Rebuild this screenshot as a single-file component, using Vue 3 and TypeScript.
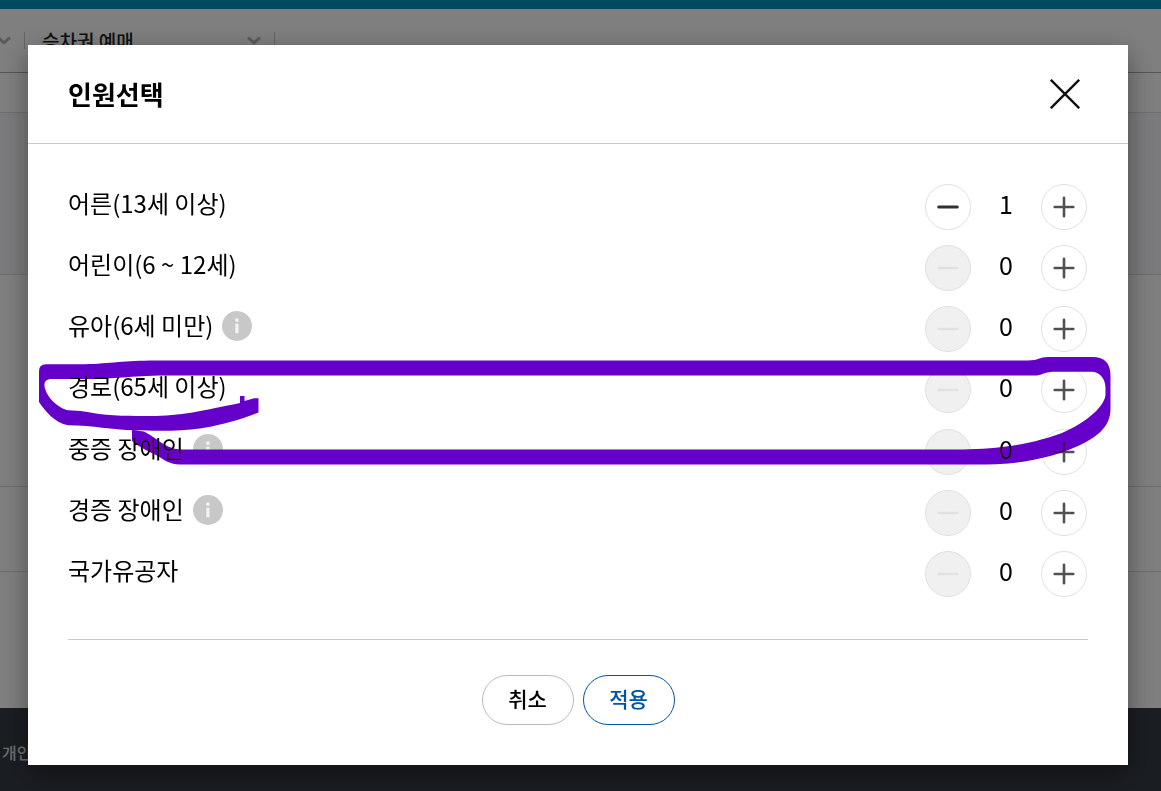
<script setup lang="ts">
import { ref } from 'vue'

interface Passenger {
  id: string
  label: string
  info: boolean
  count: number
}

const passengers = ref<Passenger[]>([
  { id: 'adult', label: '어른(13세 이상)', info: false, count: 1 },
  { id: 'child', label: '어린이(6 ~ 12세)', info: false, count: 0 },
  { id: 'infant', label: '유아(6세 미만)', info: true, count: 0 },
  { id: 'senior', label: '경로(65세 이상)', info: false, count: 0 },
  { id: 'severe', label: '중증 장애인', info: true, count: 0 },
  { id: 'mild', label: '경증 장애인', info: true, count: 0 },
  { id: 'merit', label: '국가유공자', info: false, count: 0 },
])

function change(p: Passenger, step: number) {
  p.count = Math.max(0, p.count + step)
}
</script>

<template>
  <div class="page">
    <div class="topbar"></div>
    <nav class="crumbs">
      <div class="crumb first">
        <svg class="chevron" viewBox="0 0 14 9" aria-hidden="true"><path d="M1 1.5 7 6.8 13 1.5" /></svg>
      </div>
      <div class="crumb">
        <span>승차권 예매</span>
        <svg class="chevron" viewBox="0 0 14 9" aria-hidden="true"><path d="M1 1.5 7 6.8 13 1.5" /></svg>
      </div>
    </nav>
    <div class="band tabs"></div>
    <div class="band hero"></div>
    <div class="band content"></div>
    <div class="band strip"></div>
    <div class="band rest"></div>
    <footer class="footer"><a href="#">개인</a></footer>
  </div>

  <div class="overlay">
    <section class="modal" role="dialog" aria-modal="true" aria-labelledby="dialog-title">
      <header class="head">
        <h1 id="dialog-title">인원선택</h1>
        <button type="button" class="close" aria-label="닫기">
          <svg viewBox="0 0 30 30" aria-hidden="true"><path d="M.8.8 29.2 29.2M29.2.8.8 29.2" /></svg>
        </button>
      </header>

      <div class="body">
        <ul class="list">
          <li v-for="p in passengers" :key="p.id" class="row">
            <div class="name">
              <span :id="p.id">{{ p.label }}</span>
              <button v-if="p.info" type="button" class="info" aria-label="안내">
                <svg viewBox="0 0 30 30" aria-hidden="true">
                  <circle cx="15" cy="15" r="15" fill="#c8c8c8" />
                  <path d="M13.3 7.500h3.200v3.200h-3.200zM13.3 12.700h3.200v9.600h-3.200z" fill="#f4f4f4" />
                </svg>
              </button>
            </div>
            <div class="stepper" role="group" :aria-labelledby="p.id">
              <button type="button" class="step" aria-label="감소" :disabled="p.count === 0" @click="change(p, -1)">
                <svg viewBox="0 0 22 22" aria-hidden="true"><path class="minus" d="M1.700 11h18.600" /></svg>
              </button>
              <output class="count">{{ p.count }}</output>
              <button type="button" class="step" aria-label="증가" @click="change(p, 1)">
                <svg viewBox="0 0 22 22" aria-hidden="true"><path class="plus" d="M1.700 11h18.600M11 1.700v18.600" /></svg>
              </button>
            </div>
          </li>
        </ul>
        <div class="actions">
          <button type="button" class="pill">취소</button>
          <button type="button" class="pill primary">적용</button>
        </div>
      </div>

      <svg class="marker" viewBox="28 45 1100 720" preserveAspectRatio="none" aria-hidden="true">
        <path
          d="M39 402V371Q39 364.500 46 364.300L85 364.300C110 363.500 125 360.500 155 360.500H1028C1038 360.500 1040 357 1048 357H1093C1104 357 1110.500 363 1110.500 375V409C1110.500 428 1095 438 1078 446C1050 459 1015 464.500 985 464.500H180C170 464.500 164 460 158 456C148 451 139 447 132 441V430L144 431.500C157 438 166 449.500 182 449.500H955C1000 449.500 1032 444 1062 433C1088 422 1105.500 405 1105.500 394V388C1105.500 378 1099 371.700 1092 371.700H1053C1044 372 1042 375.500 1034 375.500H165C130 376 112 379 92 379H50C46 379.500 44 382 44.500 386C46 397 58 408 68 410.300C74 411 80 410.500 84 411.500C105 415.500 122 416 145 416C180 416.500 200 411 240 403V396H244.500V401L254 398.300H258.500V412.500C240 420 220 425 200 428.500C180 431.500 155 431 135 430.300C110 430 95 425.500 68 425.300C55 423 45 411 39 402Z"
        />
      </svg>
    </section>
  </div>
</template>

<style>
body {
  margin: 0;
  background: #fff;
}
</style>

<style scoped>
* {
  box-sizing: border-box;
}

.page,
.overlay,
button {
  font-family: "Noto Sans CJK KR", "Noto Sans", sans-serif;
}

.page {
  display: flex;
  flex-direction: column;
  height: 100vh;
  overflow: hidden;
}

.topbar {
  flex: none;
  height: 9px;
  background: #0093c1;
}

.crumbs {
  display: flex;
  flex: none;
  height: 64px;
  padding-top: 23px;
  border-bottom: 1px solid #aaa;
}

.crumb {
  display: flex;
  justify-content: space-between;
  width: 250px;
  height: 17px;
  padding: 0 13px 0 17px;
  border-right: 1px solid #ccc;
  font-size: 19px;
  line-height: 17px;
  font-weight: 500;
  color: #222;
}

.crumb.first {
  justify-content: flex-end;
  width: 25px;
  padding: 0 13px 0 0;
}

.chevron {
  flex: none;
  width: 14px;
  height: 9px;
  margin-top: 4px;
  fill: none;
  stroke: #b4b4b8;
  stroke-width: 3;
}

.band {
  flex: none;
  border-bottom: 1px solid #ddd;
}

.tabs {
  height: 40px;
}

.hero {
  height: 162px;
  background: #f7f7fa;
}

.content {
  height: 212px;
}

.strip {
  height: 85px;
}

.rest {
  height: 136px;
  border: 0;
}

.footer {
  flex: 1;
  padding: 32px 2px 0;
  background: #353b44;
  font-size: 16px;
  line-height: 24px;
  font-weight: 500;
}

.footer a {
  color: #ddd;
  text-decoration: none;
}

.overlay {
  position: fixed;
  inset: 0;
  padding: 45px 33px 26px 28px;
  background: rgba(0, 0, 0, 0.5);
}

.modal {
  position: relative;
  isolation: isolate;
  background: #fff;
  color: #000;
  box-shadow: 0 8px 25px rgba(0, 0, 0, 0.4);
}

.head {
  display: flex;
  align-items: center;
  justify-content: space-between;
  height: 99px;
  padding: 0 48px 0 40px;
  border-bottom: 1px solid #ccc;
}

h1 {
  margin: 0;
  font-size: 26px;
  line-height: 40px;
  font-weight: 700;
}

button {
  display: block;
  margin: 0;
  padding: 0;
  border: 0;
  background: none;
  cursor: pointer;
}

button svg {
  display: block;
  width: 100%;
  height: 100%;
}

.close {
  width: 30px;
  height: 30px;
}

.close path {
  fill: none;
  stroke: #111;
  stroke-width: 2.4;
}

.body {
  padding: 40px;
}

.list {
  display: flex;
  flex-direction: column;
  justify-content: space-between;
  min-height: 456px;
  margin: 0;
  padding: 0 0 42px;
  border-bottom: 1px solid #ccc;
  list-style: none;
}

.row {
  display: flex;
  justify-content: space-between;
  height: 46px;
}

.name {
  display: flex;
  align-items: flex-start;
  gap: 9px;
  font-size: 24px;
  line-height: 37px;
}

.info {
  width: 30px;
  height: 30px;
  margin-top: 5px;
}

.stepper {
  display: flex;
  padding-right: 1px;
}

.step {
  width: 46px;
  height: 46px;
  padding: 11px;
  border: 1px solid #e0e0e0;
  border-radius: 50%;
  background: #fff;
}

.step:disabled {
  background: #f0f0f0;
  cursor: default;
}

.step path {
  fill: none;
  stroke: #505050;
  stroke-width: 2.6;
  stroke-linecap: round;
}

.step .minus {
  stroke: #303030;
  stroke-width: 3;
}

.step:disabled .minus {
  stroke: #e0e1e2;
  stroke-width: 2.6;
}

.count {
  width: 70px;
  font-size: 25px;
  line-height: 39px;
  text-align: center;
}

.actions {
  display: flex;
  justify-content: center;
  gap: 9px;
  padding-top: 35px;
}

.pill {
  width: 92px;
  height: 50px;
  padding-bottom: 4px;
  border: 1px solid #bbb;
  border-radius: 25px;
  background: #fff;
  font-size: 21px;
  font-weight: 500;
  color: #000;
}

.primary {
  border-color: #0054a6;
  color: #0054a6;
}

.marker {
  position: absolute;
  inset: 0;
  width: 100%;
  height: 100%;
  fill: #6500cb;
  mix-blend-mode: darken;
  pointer-events: none;
}
</style>
